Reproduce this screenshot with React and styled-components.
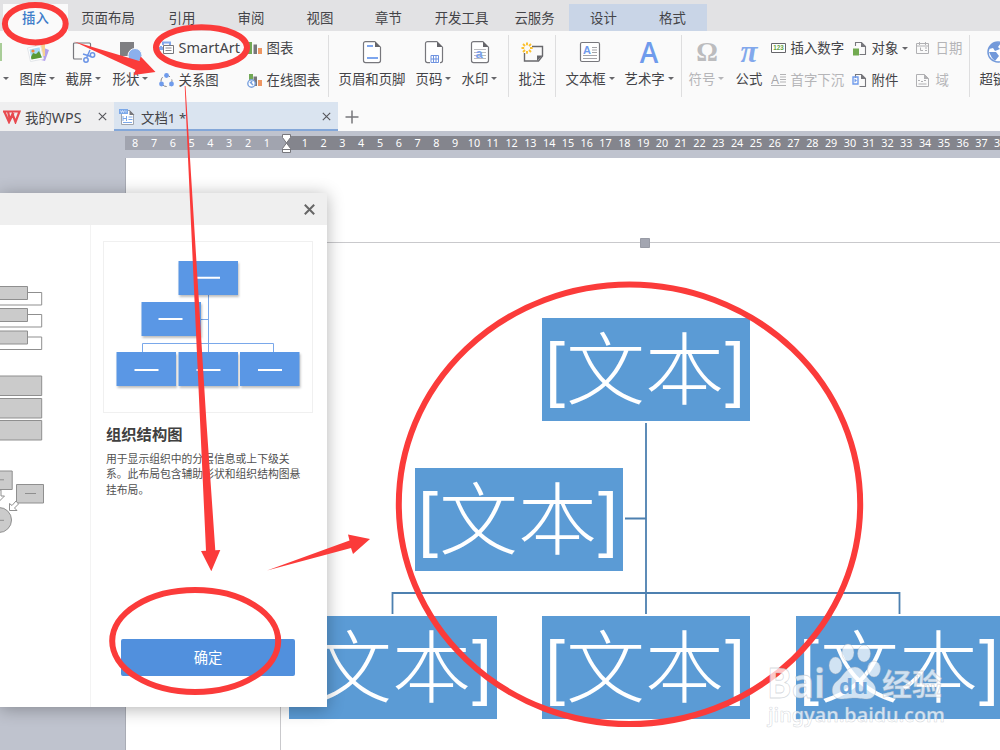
import React from 'react';
import styled, { createGlobalStyle } from 'styled-components'

const menu = [
    { name: '插入', width: 65, type: 'active' },
    { name: '页面布局', width: 80 },
    { name: '引用', width: 68 },
    { name: '审阅', width: 70 },
    { name: '视图', width: 68 },
    { name: '章节', width: 69 },
    { name: '开发工具', width: 77 },
    { name: '云服务', width: 69 },
    { name: '设计', width: 69, type: 'context' },
    { name: '格式', width: 69, type: 'context' },
]

const negative = [8, 7, 6, 5, 4, 3, 2, 1]
const positive = Array.from({ length: 38 }, (_, i) => i + 1)

const nodes = [
    { x: 542, y: 318 },
    { x: 415, y: 467.5 },
    { x: 289, y: 616.3 },
    { x: 542, y: 616.3 },
    { x: 796, y: 616.3 },
]

const Icon = ({ w = 24, h = 24, children }) => (
    <svg width={w} height={h} viewBox={`0 0 ${w} ${h}`} fill='none'>{children}</svg>
)

const Gallery = () => (
    <Icon>
        <path d='M18 8l5 2-4 11-4-1z' fill='#b3a2ec' />
        <path d='M9 3l10-1 0 14-10 0z' fill='#f7d391' />
        <path d='M1.500 8l13-3 3 14-13 2.500z' fill='#fff' stroke='#e3e6ea' />
        <path d='M3.500 9.500l10-2.300 2 10-10 2z' fill='#a9dcf7' />
        <path d='M5 17l2-4 3 1 3-3 3 6.500-10.500 2z' fill='#5a9a34' />
        <circle cx='7' cy='11' r='1.600' fill='#f2893a' />
    </Icon>
)

const Capture = () => (
    <Icon>
        <path d='M10 19H2.500a1 1 0 0 1-1-1V4a1 1 0 0 1 1-1h15a1 1 0 0 1 1 1v5' stroke='#77777c' strokeWidth='1.200' />
        <path d='M18 10l-3.500 8M11 14l8 2.500' stroke='#6b94e6' strokeWidth='1.400' />
        <circle cx='14' cy='20' r='2.200' stroke='#6b94e6' strokeWidth='1.500' />
        <circle cx='20.500' cy='15' r='2.200' stroke='#6b94e6' strokeWidth='1.500' />
    </Icon>
)

const Shapes = () => (
    <Icon>
        <path d='M1 2h14v14H1z' fill='#7f7f82' />
        <circle cx='16' cy='15.500' r='7' fill='#8bb0ec' stroke='#fafafa' />
    </Icon>
)

const SmartArtIcon = () => (
    <Icon w={15} h={14}>
        <path d='M2 9V5M4 4V1.500h7V4' stroke='#82a8ec' strokeWidth='2' />
        <path d='M0 6h4v3H0z' fill='#82a8ec' />
        <path d='M4.500 4.500h10v8h-10z' fill='#fff' stroke='#77777c' />
        <path d='M6.500 7h6M6.500 9.500h6' stroke='#88888c' />
    </Icon>
)

const Relation = () => (
    <Icon w={15} h={15}>
        <circle cx='7.500' cy='8' r='5.500' stroke='#88888c' strokeDasharray='5 3' />
        <circle cx='7.500' cy='2.500' r='2.400' fill='#6f9bec' />
        <circle cx='2.500' cy='11' r='2.400' fill='#6f9bec' />
        <circle cx='12.500' cy='11' r='2.400' fill='#6f9bec' />
    </Icon>
)

const Chart = ({ online }) => (
    <Icon w={15} h={15}>
        <path d={online ? 'M2 1h4v7H2z' : 'M1 1h4v12H1z'} fill='#72a956' />
        <path d='M6.500 3.500h3.500V13H6.500z' fill='#77777b' />
        <path d='M11 7h4v6h-4z' fill='#ee9662' />
        {online && <circle cx='4.500' cy='10.500' r='3.700' fill='#fff' stroke='#7ba2df' strokeWidth='1.400' />}
        {online && <path d='M3 9l3 3M5 8l-1 2' stroke='#7ba2df' strokeWidth='1.500' />}
    </Icon>
)

const PageShape = ({ children }) => (
    <Icon w={20} h={24}>
        <path d='M13 1.600H3.500a2 2 0 0 0-2 2v17a2 2 0 0 0 2 2h13a2 2 0 0 0 2-2V7' fill='#fff' stroke='#77777c' strokeWidth='1.200' />
        <path d='M13 1l6 6h-6z' fill='#66666b' />
        {children}
    </Icon>
)

const Comment = () => (
    <Icon>
        <path d='M12 6.500h10.500V16l-4 5H4.500v-8' stroke='#68686c' strokeWidth='1.400' />
        <path d='M17 21v-5.500h5.500z' fill='#68686c' />
        <path d='M7 2.500v2.700M7 11v2.700M1.500 8h2.700M10 8h2.700M3 4l2 2M9 10l2 2M3 12l2-2M9 6l2-2' stroke='#fbc02f' strokeWidth='1.900' />
    </Icon>
)

const TextBox = () => (
    <Icon w={22} h={22}>
        <rect x='1.500' y='1.500' width='19' height='19' rx='1.500' fill='#fff' stroke='#77777c' strokeWidth='1.200' />
        <path d='M13 6.500h5M13 9h5M13 11.500h5M4 14.500h14M4 17.500h14' stroke='#a4a4a8' />
        <text x='4' y='12.500' fontFamily='Liberation Sans' fontWeight='bold' fontSize='11' fill='#6f9bec'>A</text>
    </Icon>
)

const SmallDoc = ({ type }) => (
    <Icon w={15} h={15}>
        <path d='M3.500 5V1.500h6l4 4v8h-6' stroke='#77777c' strokeWidth='1.100' />
        <path d='M9 1v5h5z' fill='#77777c' />
        {type === 'object'
            ? <path d='M1 7.500h6v7H1z' fill='#72aa50' />
            : <><path d='M1 4h5v7H1z' stroke='#6f9bec' strokeWidth='1.400' /><path d='M2.500 5.500l2.500 2-2.500 2z' fill='#6f9bec' /></>}
    </Icon>
)

const NumberIcon = () => (
    <Icon w={15} h={15}>
        <path d='M.5 2.500h14v9H.5z' fill='#fff' stroke='#66666a' />
        <text x='2.200' y='9.400' fontFamily='Liberation Sans' fontWeight='bold' fontSize='6.300' fill='#62a33f'>123</text>
    </Icon>
)

const DropCap = () => (
    <Icon w={15} h={15}>
        <text x='0' y='10.500' fontFamily='Liberation Sans' fontSize='12' fill='#a6a6a9'>A</text>
        <path d='M9 1.500h6M9 4h6M9 6.500h6M9 9h6M0 12.500h15' stroke='#b3b3b5' />
    </Icon>
)

const DateIcon = () => (
    <Icon w={15} h={15}>
        <path d='M1.500 2.500h12v10h-12zM1.500 5h12M4.500 1v3M10.500 1v3' stroke='#b0b0b3' />
        <path d='M5.500 6.500v3H8M10 7h2M10 9.500h2' stroke='#b0b0b3' />
    </Icon>
)

const Field = () => (
    <Icon w={15} h={15}>
        <path d='M1.500 1.500h8l4 4v8h-12z' stroke='#b0b0b3' />
        <path d='M9 1v5h5zM3 7h2v1H3zM6 8h2v1H6zM9 7h2v1H9z' fill='#b0b0b3' />
        <path d='M3.500 11h8' stroke='#b0b0b3' />
    </Icon>
)

const Globe = () => (
    <Icon w={26} h={24}>
        <circle cx='11' cy='12' r='10' fill='#fff' stroke='#7299da' strokeWidth='1.500' />
        <path d='M3 6l5-4 6 1-3 4 2 2-5 2-2-3-4 1zM2 12l7 0 3 4-4 5-3-3zM13 12h8l-2 7-4-3z' fill='#7299da' />
    </Icon>
)

const WpsLogo = () => (
    <Icon w={18} h={14}>
        <path d='M0 1.500h5l2 8.500 3.500-7M5.500 1.500h11l-4 10.500-3-8-3.500 8L1.500 2' stroke='#e84a50' strokeWidth='2.200' />
    </Icon>
)

const DocIcon = () => (
    <Icon w={17} h={18}>
        <path d='M2.500 2.500h8l4 4v10h-12z' fill='#fff' stroke='#a0a5ad' />
        <path d='M10.500 2v5h5z' fill='#77777c' />
        <path d='M0 1h9v5H0z' fill='#7ba8e9' />
        <path d='M1.500 2.500l1 2 1-2 1 2 1-2M7 2.500v2' stroke='#e6effc' strokeWidth='.8' />
        <path d='M4 8v5M7.500 8v5M4 10.500h3.500M9.500 9h4M9.500 11.500h4M4 14.500h9' stroke='#7ba8e9' />
    </Icon>
)

const Cross = ({ size = 9, width = 1.100, color = '#55555a' }) => (
    <Icon w={size} h={size}>
        <path d={`M.8.8L${size - .8} ${size - .8}M${size - .8}.8L.8 ${size - .8}`} stroke={color} strokeWidth={width} />
    </Icon>
)

const Tool = ({ width, icon, name, arrow, disabled }) => (
    <BigTool $width={width} $disabled={disabled}>
        <div className='icon'>{icon}</div>
        <div className='label'>{name}{arrow && <Arrow $disabled={disabled} />}</div>
    </BigTool>
)

const Small = ({ icon, name, arrow, disabled }) => (
    <SmallTool $disabled={disabled}>
        {icon}
        <span className='name'>{name}</span>
        {arrow && <Arrow />}
    </SmallTool>
)

const Ribbon = () => (
    <Toolbar>
        <Edge><i /><Arrow /></Edge>
        <Tool width={36} icon={<Gallery />} name='图库' arrow />
        <Tool width={37} icon={<Capture />} name='截屏' arrow />
        <Tool width={37} icon={<Shapes />} name='形状' arrow />
        <SmallColumn $width={78} $gap={5} $left={-1}>
            <Small icon={<SmartArtIcon />} name={<Latin $size={14.5}>SmartArt</Latin>} />
            <Small icon={<Relation />} name='关系图' />
        </SmallColumn>
        <SmallColumn $width={74} $gap={5}>
            <Small icon={<Chart />} name='图表' />
            <Small icon={<Chart online />} name='在线图表' />
        </SmallColumn>
        <Divider $left={-3} />
        <Tool width={67} icon={<PageShape>
            <path d='M5 6h6M5 18h11' stroke='#7ea6ee' strokeWidth='2' />
        </PageShape>} name='页眉和页脚' />
        <Tool width={36} icon={<PageShape>
            <path d='M6 14h10v10H6z' fill='#fff' />
            <path d='M7 15.500h7.500v7H7zM7 19h7.500M9.500 15.500v7M12 15.500v7' stroke='#6f93e0' />
        </PageShape>} name='页码' arrow />
        <Tool width={36} icon={<PageShape>
            <path d='M4 9.500h12M4 12.500h12M4 15.500h12M4 18.500h12' stroke='#bcbcc0' />
            <text x='5.500' y='18' fontFamily='Liberation Sans' fontWeight='bold' fontSize='13' fill='#7ba2ec'>a</text>
        </PageShape>} name='水印' arrow />
        <Divider />
        <Tool width={26} icon={<Comment />} name='批注' />
        <Divider />
        <Tool width={49} icon={<TextBox />} name='文本框' arrow />
        <Tool width={49} icon={<Letter $size={28} $weight={600}>A</Letter>} name='艺术字' arrow />
        <Divider $left={-3} $right={-3} />
        <Tool width={37} icon={<Letter $size={27} $serif $weight={700} $color='#bcbcbe'>Ω</Letter>} name='符号' arrow disabled />
        <Tool width={27} icon={<Letter $size={31} $serif $italic $weight={700} $color='#82a8ec'>π</Letter>} name='公式' />
        <SmallColumn $width={75} $gap={5} $left={-2}>
            <Small icon={<NumberIcon />} name='插入数字' />
            <Small icon={<DropCap />} name='首字下沉' disabled />
        </SmallColumn>
        <SmallColumn $width={57} $gap={5} $left={-4}>
            <Small icon={<SmallDoc type='object' />} name='对象' arrow />
            <Small icon={<SmallDoc />} name='附件' />
        </SmallColumn>
        <SmallColumn $width={47} $gap={6} $left={-4}>
            <Small icon={<DateIcon />} name='日期' disabled />
            <Small icon={<Field />} name='域' disabled />
        </SmallColumn>
        <Divider $left={-3} />
        <Tool width={40} icon={<Globe />} name='超链接' />
    </Toolbar>
)

const Preview = () => (
    <svg width='208' height='170' viewBox='104 242 208 170'>
        <g stroke='#7aa8ea' fill='none'>
            <path d='M208.500 295v58M200 319.500h8.500M142.500 353v-9.500h131v9.500' />
        </g>
        <g fill='#5a97e5' className='boxes'>
            <rect x='178.500' y='261' width='59.500' height='34' />
            <rect x='141.500' y='302' width='59.500' height='34' />
            <rect x='116.500' y='352' width='59.500' height='34' />
            <rect x='178.500' y='352' width='59.500' height='34' />
            <rect x='240' y='352' width='59.500' height='34' />
        </g>
        <path d='M196 277.800h24M158.500 319h24M134.500 370h24M196.500 370h24M258 370h24' stroke='#fff' strokeWidth='2' />
    </svg>
)

const LayoutList = () => (
    <svg width='90' height='482' viewBox='0 225 90 482' fill='#cbcbcb' stroke='#8f8f8f'>
        {[286.500, 308.500, 331].map(y => (
            <g key={y}>
                <path d={`M-5 ${y + 6}H41.700v12.500H-5`} fill='#fff' />
                <path d={`M-5 ${y}H27.500v13H-5z`} />
            </g>
        ))}
        {[376, 398.500, 420.500].map(y => <path key={y} d={`M-5 ${y}H41.700v19.500H-5z`} />)}
        <path d='M-5 471H12.200v18.500H-5zM16.500 484.500H43.500v18.500h-27zM25 493.500h11M-1 479.800h5' />
        <path d='M-1 490h2v6h3.500l-5 5M9.500 503.500v7h7.500l-2.500-2.500 4-4-2.500-3-4 4.500z' fill='#fff' />
        <circle cx='-1' cy='520' r='12.500' />
        <path d='M-1 520.300h5' />
    </svg>
)

const Marks = () => (
    <Overlay width='1000' height='750' viewBox='0 0 1000 750'>
        <g fill='none' stroke='#fb3b3a' strokeWidth='6'>
            <ellipse cx='35.300' cy='23.700' rx='30.400' ry='18.700' />
            <ellipse cx='201.500' cy='47.300' rx='45.500' ry='20' />
            <ellipse cx='195.200' cy='641' rx='83' ry='51' />
            <ellipse cx='629.500' cy='504.300' rx='230.700' ry='219.700' />
        </g>
        <g fill='#fb3b3a'>
            <path d='M74 41.500L139.300 61l1.400-4.500L155.500 72l-21.800 3 1.800-5z' />
            <path d='M184.700 86h.8L206.300 420l9 130.200 5-.2-9 21.300L201 551l5-.3-6-130.700z' />
            <path d='M267 570.500L349.500 540.500l-1.500-6 22 4.500-17 15-2-6z' />
        </g>
    </Overlay>
)

const Dialog = () => (
    <Modal>
        <header><Cross size={11} width={2} color='#666' /></header>
        <ModalBody>
            <LayoutList />
            <Details>
                <PreviewBox><Preview /></PreviewBox>
                <h2>组织结构图</h2>
                <p>用于显示组织中的分层信息或上下级关<br />系。此布局包含辅助形状和组织结构图悬<br />挂布局。</p>
                <Submit>确定</Submit>
            </Details>
        </ModalBody>
    </Modal>
)

const Watermark = () => (
    <Overlay width='1000' height='750' viewBox='0 0 1000 750'>
        <WatermarkText>
            <text x='767' y='698' fontSize='41' textLength='58' lengthAdjust='spacingAndGlyphs'>Bai</text>
            <ellipse cx='835.500' cy='665.500' rx='6.500' ry='8.500' />
            <ellipse cx='848' cy='652.500' rx='6' ry='8.500' />
            <ellipse cx='864' cy='653.500' rx='6.500' ry='8.500' />
            <ellipse cx='874' cy='669' rx='6.500' ry='8' />
            <path d='M855 667c8 0 10 10 17 15 6 5 5 17-5 17-6 0-8-1-13-1s-7 1-13 1c-10 0-11-12-5-17 8-6 10-15 19-15z' />
            <text x='882' y='695' fontSize='30' textLength='60'>经验</text>
            <text x='768' y='722' fontSize='20.500' className='url' textLength='177' lengthAdjust='spacingAndGlyphs'>jingyan.baidu.com</text>
        </WatermarkText>
        <text x='839' y='694' fontFamily='Noto Sans' fontWeight='bold' fontSize='22' fill='#6ea5da' textLength='29'>du</text>
    </Overlay>
)

const App = () => {
    return (
        <Window>
            <Global />
            <MenuBar>
                {menu.map(item => (
                    <MenuItem key={item.name} $width={item.width} $type={item.type}>{item.name}</MenuItem>
                ))}
            </MenuBar>
            <Ribbon />
            <DocTabs>
                <DocTab $width={114}>
                    <WpsLogo /><span>我的<Latin>WPS</Latin></span><Cross />
                </DocTab>
                <DocTab $width={224} $active>
                    <DocIcon /><span>文档<Latin $size={13.4}>1 *</Latin></span><Cross />
                </DocTab>
                <Icon w={28} h={29}><path d='M14 8.500v13M7.500 15h13' stroke='#77777b' strokeWidth='1.500' /></Icon>
            </DocTabs>
            <Workspace>
                <Ruler>
                    <RulerPart $dark={false}>{negative.map(n => <span key={n}>{n}</span>)}</RulerPart>
                    <RulerPart $dark>{positive.map(n => <span key={n}>{n}</span>)}</RulerPart>
                </Ruler>
                <Page />
            </Workspace>
            <Overlay width='1000' height='750' viewBox='0 0 1000 750' fill='none'>
                <path d='M280.500 750V242.500H1000' stroke='#c9c9cc' />
                <path d='M640.500 238.500h9v9h-9z' fill='#a3a6b1' stroke='#989ba5' />
                <path d='M646 423v191M625 518.500h21M392.500 614v-21h507v21' stroke='#4d80b0' strokeWidth='1.800' />
                <path d='M282.500 134.500h8v3l-4 5.500 4 5.500v4h-8v-4l4-5.500-4-5.500zM282.500 149.500h8' fill='#fff' stroke='#77777c' />
            </Overlay>
            {nodes.map(node => (
                <Node key={`${node.x}-${node.y}`} $x={node.x} $y={node.y}>
                    <b>[</b><span>文本</span><b>]</b>
                </Node>
            ))}
            <Dialog />
            <Marks />
            <Watermark />
        </Window>
    );
};

export default App;

const Global = createGlobalStyle`
    body{
        margin: 0;
        overflow: hidden;
    }
    *{
        box-sizing: border-box;
    }
`

const Window = styled.div`
    position: relative;
    display: flex;
    flex-direction: column;
    width: 1000px;
    height: 750px;
    overflow: hidden;
    font-family: "Noto Sans CJK SC", sans-serif;
    font-size: 13.4px;
    color: #444448;
    white-space: nowrap;
    svg{
        flex-shrink: 0;
        display: block;
    }
`

const MenuBar = styled.nav`
    display: flex;
    height: 31px;
    padding: 4px 0 0 3px;
    background: #e2e2e4;
`

const MenuItem = styled.div`
    display: flex;
    align-items: center;
    justify-content: center;
    width: ${p => p.$width}px;
    padding-bottom: 2px;
    color: ${p => p.$type === 'active' ? '#3d7cc9' : '#444448'};
    font-weight: ${p => p.$type === 'active' ? 500 : 400};
    background: ${p => p.$type === 'active' ? '#fafafa' : p.$type === 'context' ? '#c9d5e7' : 'none'};
`

const Toolbar = styled.div`
    display: flex;
    gap: 10px;
    height: 71px;
    background: #fafafa;
`

const Arrow = styled.span`
    display: block;
    flex-shrink: 0;
    width: 0;
    height: 0;
    margin-left: 3px;
    border: 3.5px solid transparent;
    border-top-color: ${p => p.$disabled ? '#b5b5b8' : '#66666a'};
    border-bottom: 0;
`

const Edge = styled.div`
    width: 9.5px;
    flex-shrink: 0;
    padding-top: 12px;
    i{
        display: block;
        width: 2px;
        height: 18px;
        margin-bottom: 16px;
        background: #a9cd98;
    }
`

const BigTool = styled.div`
    width: ${p => p.$width}px;
    flex-shrink: 0;
    color: ${p => p.$disabled ? '#b5b5b8' : 'inherit'};
    .icon{
        display: flex;
        align-items: center;
        justify-content: center;
        height: 24px;
        margin-top: 9px;
    }
    .label{
        display: flex;
        align-items: center;
        height: 20px;
        margin-top: 4px;
    }
`

const SmallColumn = styled.div`
    display: grid;
    grid-template-rows: 32px 32px;
    width: ${p => p.$width}px;
    flex-shrink: 0;
    margin-left: ${p => p.$left || 0}px;
    > div{
        gap: ${p => p.$gap}px;
    }
`

const SmallTool = styled.div`
    display: flex;
    align-items: center;
    padding-top: 2px;
    color: ${p => p.$disabled ? '#b5b5b8' : 'inherit'};
    .name{
        margin-top: -2px;
    }
    ${Arrow}{
        margin-left: -1px;
    }
`

const Latin = styled.span`
    font-family: "Noto Sans", sans-serif;
    font-size: ${p => p.$size || 14.3}px;
`

const Letter = styled.span`
    font-family: ${p => p.$serif ? '"Liberation Serif", serif' : '"Open Sans", sans-serif'};
    font-size: ${p => p.$size}px;
    font-style: ${p => p.$italic ? 'italic' : 'normal'};
    font-weight: ${p => p.$weight};
    line-height: 24px;
    color: ${p => p.$color || '#6f9bec'};
`

const Divider = styled.div`
    width: 1px;
    height: 62px;
    flex-shrink: 0;
    margin: 4px ${p => p.$right || 0}px 0 ${p => p.$left || 0}px;
    background: #dededf;
`

const DocTabs = styled.div`
    display: flex;
    height: 29px;
    background: #fafafa;
`

const DocTab = styled.div`
    display: flex;
    align-items: center;
    width: ${p => p.$width}px;
    padding: ${p => p.$active ? '0 7px 0 5px' : '0 7px 0 3px'};
    background: ${p => p.$active ? '#dae4f0' : '#efeff0'};
    box-shadow: ${p => p.$active ? 'inset 0 -2px #83a7d9' : 'none'};
    > span{
        flex: 1;
        margin-left: ${p => p.$active ? 5 : 4}px;
    }
`

const Workspace = styled.main`
    flex: 1;
    padding-top: 5px;
    background: #bfc3ce;
`

const Ruler = styled.div`
    display: flex;
    height: 14px;
    margin-left: 125px;
    overflow: hidden;
`

const RulerPart = styled.div`
    display: flex;
    flex-shrink: 0;
    width: ${p => p.$dark ? 'auto' : '161px'};
    padding-left: ${p => p.$dark ? 9.4 : .8}px;
    background: ${p => p.$dark ? '#84858d' : '#a1a4af'};
    font: 10.8px/13px "Noto Sans", sans-serif;
    color: #fff;
    span{
        width: 18.81px;
        flex-shrink: 0;
        text-align: center;
    }
`

const Page = styled.div`
    height: 592px;
    margin: 8px 0 0 125px;
    border-left: 1px solid #a9acb5;
    background: #fff;
`

const Overlay = styled.svg`
    position: absolute;
    left: 0;
    top: 0;
    pointer-events: none;
`

const WatermarkText = styled.g`
    fill: rgba(255, 255, 255, .72);
    stroke: rgba(165, 172, 182, .45);
    stroke-width: .8px;
    font-family: "Noto Sans", "Noto Sans CJK SC", sans-serif;
    font-weight: 700;
    .url{
        font-weight: 600;
        stroke-width: .6px;
    }
`

const Node = styled.div`
    position: absolute;
    left: ${p => p.$x}px;
    top: ${p => p.$y}px;
    display: flex;
    align-items: flex-start;
    justify-content: center;
    width: 208px;
    height: 103px;
    background: #5b9bd5;
    color: #fff;
    span{
        margin: -5px 1px 0;
        font-size: 79px;
        font-weight: 300;
        line-height: 103px;
    }
    b{
        margin-top: 5px;
        font: 72px/90px "Liberation Sans", sans-serif;
    }
    b:first-child{
        margin-left: -2px;
    }
`

const Modal = styled.section`
    position: absolute;
    left: 0;
    top: 193px;
    width: 327px;
    height: 514px;
    background: #fff;
    box-shadow: 0 2px 16px rgba(0, 0, 0, .3);
    header{
        display: flex;
        align-items: center;
        justify-content: flex-end;
        height: 32px;
        padding-right: 12px;
        background: #efefef;
    }
`

const ModalBody = styled.div`
    display: flex;
    height: 482px;
`

const Details = styled.div`
    display: flex;
    flex-direction: column;
    width: 237px;
    padding: 16px 14px 0 12px;
    border-left: 1px solid #f3f3f3;
    h2{
        margin: 10px 0 0 3px;
        font-size: 15.3px;
        line-height: 20px;
        color: #404040;
    }
    p{
        height: 46px;
        margin: 8px 0 0 3px;
        font-size: 10.8px;
        line-height: 15.4px;
        color: #505050;
    }
`

const PreviewBox = styled.div`
    height: 172px;
    border: 1px solid #f0f0f0;
    .boxes{
        filter: drop-shadow(1px 2px 1px rgba(0, 0, 0, .25));
    }
`

const Submit = styled.button`
    width: 174px;
    height: 37px;
    margin: 142px 0 0 18px;
    padding: 0 0 2px;
    border: 0;
    border-radius: 2px;
    background: #5190dd;
    color: #fff;
    font: 14.3px "Noto Sans CJK SC", sans-serif;
`
